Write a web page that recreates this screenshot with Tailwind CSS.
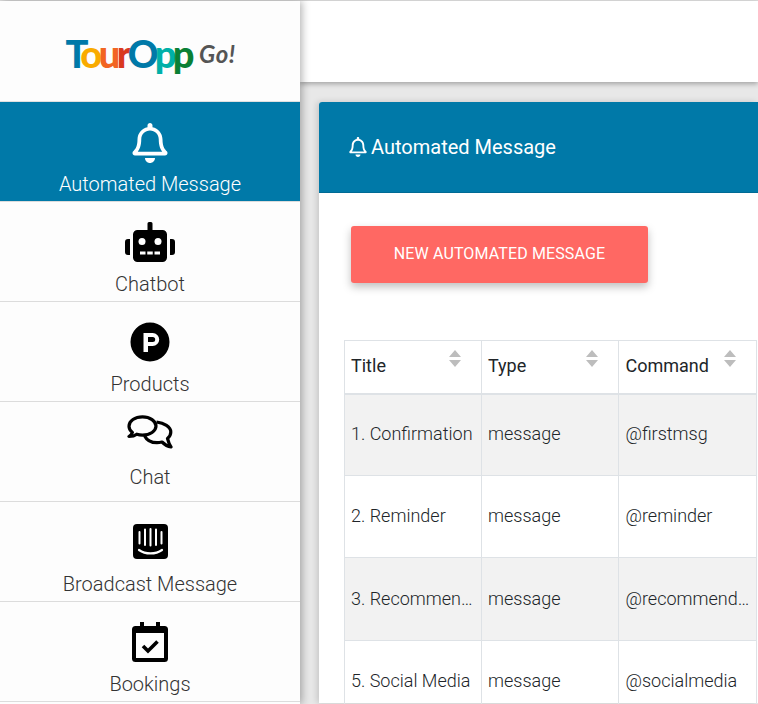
<!DOCTYPE html>
<html lang="en">

<head>
    <meta charset="UTF-8" />
    <meta name="viewport" content="width=device-width, initial-scale=1.0" />
    <title>Automated Message</title>
    <script src="https://cdn.jsdelivr.net/npm/@tailwindcss/browser@4"></script>
</head>

<body class="h-[704px] overflow-hidden bg-[#e8e8e8] font-['Roboto',sans-serif] text-[#212529]">
<div class="flex h-[704px] border-t border-[#dedede]">

    <!-- Sidebar -->
    <aside class="relative z-20 w-[300px] shrink-0 bg-[#fdfdfd] shadow-[2px_0_8px_rgba(0,0,0,0.3)] text-center text-[20px] font-light leading-[22px] text-[#333]">
        <div class="flex h-[101px] items-center justify-center border-b border-[#e0e0e0] pt-[3px] pl-[1px]">
            <span class="font-['Lato',sans-serif] text-[38px] font-black leading-none tracking-[-3.5px]"><span class="text-[#0079a8]">T</span><span class="text-[#f9ab00]">o</span><span class="text-[#f26522]">u</span><span class="text-[#d9391f]">r</span><span class="text-[#0079a8]">O</span><span class="text-[#00b0a8]">p</span><span class="text-[#0a8035]">p</span></span>
            <span class="ml-[8px] mt-[3px] font-['Lato',sans-serif] text-[24px] font-bold italic leading-none tracking-[0.5px] text-[#555]">Go!</span>
        </div>

        <a class="block h-[100px] border-b border-[#dcdcdc] bg-[#0079a8] pt-[21px] text-white">
            <svg class="mx-auto block h-[40px] w-[36px]" viewBox="0 0 448 512" fill="currentColor"><path d="M224 512c35.32 0 63.97-28.65 63.97-64H160.03c0 35.35 28.65 64 63.97 64zm215.39-149.71c-19.32-20.76-55.47-51.99-55.47-154.29 0-77.7-54.48-139.9-127.94-155.16V32c0-17.67-14.32-32-31.98-32s-31.98 14.33-31.98 32v20.84C118.56 68.1 64.08 130.3 64.08 208c0 102.3-36.15 133.53-55.47 154.29-6 6.45-8.66 14.16-8.61 21.71.11 16.4 12.98 32 32.1 32h383.8c19.12 0 32-15.6 32.1-32 .05-7.55-2.61-15.27-8.61-21.71zM67.53 368c21.22-27.97 44.42-74.33 44.53-159.42 0-.2-.06-.38-.06-.58 0-61.86 50.14-112 112-112s112 50.14 112 112c0 .2-.06.38-.06.58.11 85.1 23.31 131.46 44.53 159.42H67.53z"/></svg>
            <div class="mt-[10px]">Automated Message</div>
        </a>

        <a class="block h-[100px] border-b border-[#dcdcdc] pt-[20px]">
            <svg class="mx-auto block h-[40px] w-[50px]" viewBox="0 0 50 40"><path fill="#000" d="M24 0h2a1.5 1.5 0 0 1 1.5 1.5V8h-5V1.500A1.500 1.500 0 0 1 24 0zM12.500 8h25a4.500 4.500 0 0 1 4.500 4.500v23a4.500 4.500 0 0 1-4.500 4.500h-25A4.500 4.500 0 0 1 8 35.500v-23A4.500 4.500 0 0 1 12.500 8zM0 20a3 3 0 0 1 3-3h2v16H3a3 3 0 0 1-3-3zM45 17h2a3 3 0 0 1 3 3v10a3 3 0 0 1-3 3h-2z"/><circle cx="17" cy="19.500" r="3.500" fill="#fff"/><circle cx="33" cy="19.500" r="3.500" fill="#fff"/><path fill="#fff" d="M15 29.500h5.500v3H15zM22.250 29.500h5.500v3h-5.500zM29.500 29.500H35v3h-5.500z"/></svg>
            <div class="mt-[11px]">Chatbot</div>
        </a>

        <a class="block h-[100px] border-b border-[#dcdcdc] pt-[20px]">
            <svg class="mx-auto block h-[40px] w-[40px]" viewBox="0 0 40 40"><path fill="#000" fill-rule="evenodd" d="M20 .5a19.500 19.500 0 1 0 0 39 19.500 19.500 0 0 0 0-39zM13.500 11h9.200a6.500 6.500 0 0 1 0 13H18v6h-4.500zM18 15v5h4.700a2.500 2.500 0 0 0 0-5z"/></svg>
            <div class="mt-[11px]">Products</div>
        </a>

        <a class="block h-[100px] border-b border-[#dcdcdc] pt-[13px]">
            <svg class="mx-auto block h-[34px] w-[46px]" viewBox="0 0 46 34" fill="none" stroke="#000" stroke-width="3.200" stroke-linejoin="round"><path fill="#fdfdfd" d="M15.500 1.800C8 1.800 2 5.800 2 11.200c0 2.500 1.300 4.600 3.400 6.300-.6 1.500-1.700 2.900-3.400 4 3.200 0 6-.9 7.800-2.300 1.800.6 3.700.9 5.700.9 7.500 0 13.500-4 13.500-9s-6-9.300-13.500-9.300z"/><path d="M29.500 7C37 8 43.800 11.500 43.800 17c0 2.700-1.300 4.900-3.300 6.500.5 2 1.700 6 3.500 8.500-3.500-.5-7-3-9-5-2 .5-3 .7-5 .7-5.500 0-10-2-12.500-7"/></svg>
            <div class="mt-[17px]">Chat</div>
        </a>

        <a class="block h-[100px] border-b border-[#dcdcdc] pt-[22px]">
            <svg class="mx-auto block h-[35px] w-[35px]" viewBox="0 0 35 35"><rect width="35" height="35" rx="4" fill="#000"/><path d="M6.500 8v11.500M12 5.500V21M17.500 5v16.500M23 5.500V21M28.500 8v11.500" stroke="#fff" stroke-width="2" stroke-linecap="round" fill="none"/><path d="M6 26c6.500 4.600 16.500 4.600 23 0" stroke="#fff" stroke-width="2.200" stroke-linecap="round" fill="none"/></svg>
            <div class="mt-[14px]">Broadcast Message</div>
        </a>

        <a class="block h-[100px] border-b border-[#dcdcdc] pt-[20px]">
            <svg class="mx-auto block h-[40px] w-[36px]" viewBox="0 0 36 40"><path fill="#000" fill-rule="evenodd" d="M8 0h4v4h12V0h4v4h4.500A3.500 3.500 0 0 1 36 7.500v29a3.500 3.500 0 0 1-3.500 3.500h-29A3.500 3.500 0 0 1 0 36.500v-29A3.500 3.500 0 0 1 3.500 4H8zM4 11v25h28V11z"/><path d="M11 24l5 5 9.500-9.500" fill="none" stroke="#000" stroke-width="3.600"/></svg>
            <div class="mt-[11px]">Bookings</div>
        </a>
    </aside>

    <!-- Main -->
    <main class="min-w-0 flex-1">
        <div class="relative z-10 h-[81px] bg-white shadow-[0_2px_5px_rgba(0,0,0,0.3)]"></div>

        <section class="ml-[19px] mt-[20px] h-[601px] rounded-tl-[3px] bg-white shadow-[-2px_0_6px_rgba(0,0,0,0.15)]">
            <div class="flex h-[91px] items-center gap-[4px] rounded-tl-[3px] border-b border-[#006a94] bg-[#0079a8] pl-[30px] text-[20px] leading-none text-white">
                <svg class="h-[20px] w-[18px]" viewBox="0 0 448 512" fill="currentColor"><path d="M224 512c35.32 0 63.97-28.65 63.97-64H160.03c0 35.35 28.65 64 63.97 64zm215.39-149.71c-19.32-20.76-55.47-51.99-55.47-154.29 0-77.7-54.48-139.9-127.94-155.16V32c0-17.67-14.32-32-31.98-32s-31.98 14.33-31.98 32v20.84C118.56 68.1 64.08 130.3 64.08 208c0 102.3-36.15 133.53-55.47 154.29-6 6.45-8.66 14.16-8.61 21.71.11 16.4 12.98 32 32.1 32h383.8c19.12 0 32-15.6 32.1-32 .05-7.55-2.61-15.27-8.61-21.71zM67.53 368c21.22-27.97 44.42-74.33 44.53-159.42 0-.2-.06-.38-.06-.58 0-61.86 50.14-112 112-112s112 50.14 112 112c0 .2-.06.38-.06.58.11 85.1 23.31 131.46 44.53 159.42H67.53z"/></svg>
                <span>Automated Message</span>
            </div>

            <div class="pl-[25px]">
                <button class="ml-[7px] mt-[33px] block h-[57px] w-[297px] rounded-[3px] bg-[#ff6863] pb-[1px] text-center text-[16px] tracking-[0.13px] text-white shadow-[0_4px_8px_rgba(0,0,0,0.25)]">NEW AUTOMATED MESSAGE</button>

                <table class="mt-[57px] w-[413px] table-fixed border-collapse text-[18px] font-light">
                    <colgroup><col class="w-[137px]" /><col class="w-[137px]" /><col class="w-[138px]" /></colgroup>
                    <thead>
                        <tr class="h-[53px] border-b-2 border-[#dee2e6]">
                            <th class="relative border border-b-2 border-[#dee2e6] pb-[2px] pl-[6px] text-left font-normal">Title
                                <svg class="absolute right-[20px] top-[9px] h-[17px] w-[12px]" viewBox="0 0 12 17" fill="#bdbdbd"><path d="M6 0l6 7H0zM0 10h12l-6 7z"/></svg>
                            </th>
                            <th class="relative border border-b-2 border-[#dee2e6] pb-[2px] pl-[6px] text-left font-normal">Type
                                <svg class="absolute right-[20px] top-[9px] h-[17px] w-[12px]" viewBox="0 0 12 17" fill="#bdbdbd"><path d="M6 0l6 7H0zM0 10h12l-6 7z"/></svg>
                            </th>
                            <th class="relative border border-b-2 border-[#dee2e6] pb-[2px] pl-[6.5px] text-left font-normal">Command
                                <svg class="absolute right-[20px] top-[9px] h-[17px] w-[12px]" viewBox="0 0 12 17" fill="#bdbdbd"><path d="M6 0l6 7H0zM0 10h12l-6 7z"/></svg>
                            </th>
                        </tr>
                    </thead>
                    <tbody>
                        <tr class="h-[82px] bg-[#f2f2f2]">
                            <td class="truncate border border-[#dee2e6] pb-[2px] pl-[6px]">1. Confirmation</td>
                            <td class="truncate border border-[#dee2e6] pb-[2px] pl-[6px]">message</td>
                            <td class="truncate border border-[#dee2e6] pb-[2px] pl-[6.5px]">@firstmsg</td>
                        </tr>
                        <tr class="h-[82px]">
                            <td class="truncate border border-[#dee2e6] pb-[2px] pl-[6px]">2. Reminder</td>
                            <td class="truncate border border-[#dee2e6] pb-[2px] pl-[6px]">message</td>
                            <td class="truncate border border-[#dee2e6] pb-[2px] pl-[6.5px]">@reminder</td>
                        </tr>
                        <tr class="h-[83px] bg-[#f2f2f2]">
                            <td class="truncate border border-[#dee2e6] pb-[2px] pl-[6px] pr-[6px]">3. Recommendation</td>
                            <td class="truncate border border-[#dee2e6] pb-[2px] pl-[6px]">message</td>
                            <td class="truncate border border-[#dee2e6] pb-[2px] pl-[6.5px] pr-[6px]">@recommendation</td>
                        </tr>
                        <tr class="h-[82px]">
                            <td class="truncate border border-[#dee2e6] pb-[2px] pl-[6px]">5. Social Media</td>
                            <td class="truncate border border-[#dee2e6] pb-[2px] pl-[6px]">message</td>
                            <td class="truncate border border-[#dee2e6] pb-[2px] pl-[6.5px]">@socialmedia</td>
                        </tr>
                    </tbody>
                </table>
            </div>
        </section>
    </main>
</div>
</body>

</html>
